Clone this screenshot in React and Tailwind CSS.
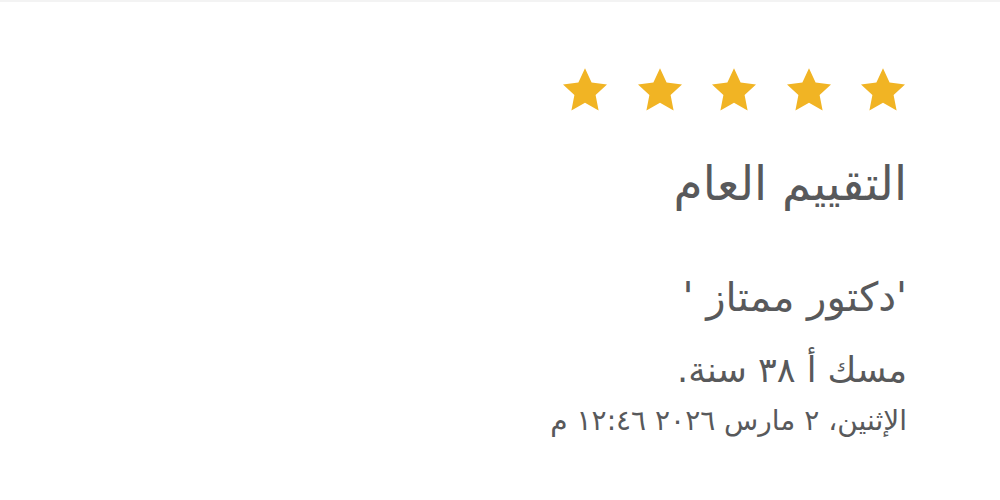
import React from "react";

function Star() {
  return (
    <svg width="48" height="46" viewBox="0 0 24 23">
      <path d="M12 0.6l3.3 7.2 7.7 0.9-5.7 5.3 1.5 7.8L12 17.9l-6.8 3.9 1.5-7.8L1 8.7l7.7-0.9z" fill="#f1b424" />
    </svg>
  );
}

export default function App() {
  return (
    <div className="w-[1000px] h-[500px] bg-white border-t-2 border-[#f3f3f3] overflow-hidden" style={{ fontFamily: '"DejaVu Sans", sans-serif' }}>
      <div dir="rtl" className="flex flex-col items-start pr-[93px] pt-[65px] text-[#58595b]">
        <div className="flex gap-[26.5px] -ml-[2px]">
          <Star /><Star /><Star /><Star /><Star />
        </div>
        <div className="mt-[43px] text-[47px] leading-[56px]">التقييم العام</div>
        <div className="mt-[60px] text-[40px] leading-[50px]">'دكتور ممتاز '</div>
        <div className="mt-[25px] text-[35px] leading-[46px]">مسك أ ٣٨ سنة.</div>
        <div className="mt-[8px] text-[28px] leading-[40px]">الإثنين، ٢ مارس ٢٠٢٦ ١٢:٤٦ م</div>
      </div>
    </div>
  );
}
